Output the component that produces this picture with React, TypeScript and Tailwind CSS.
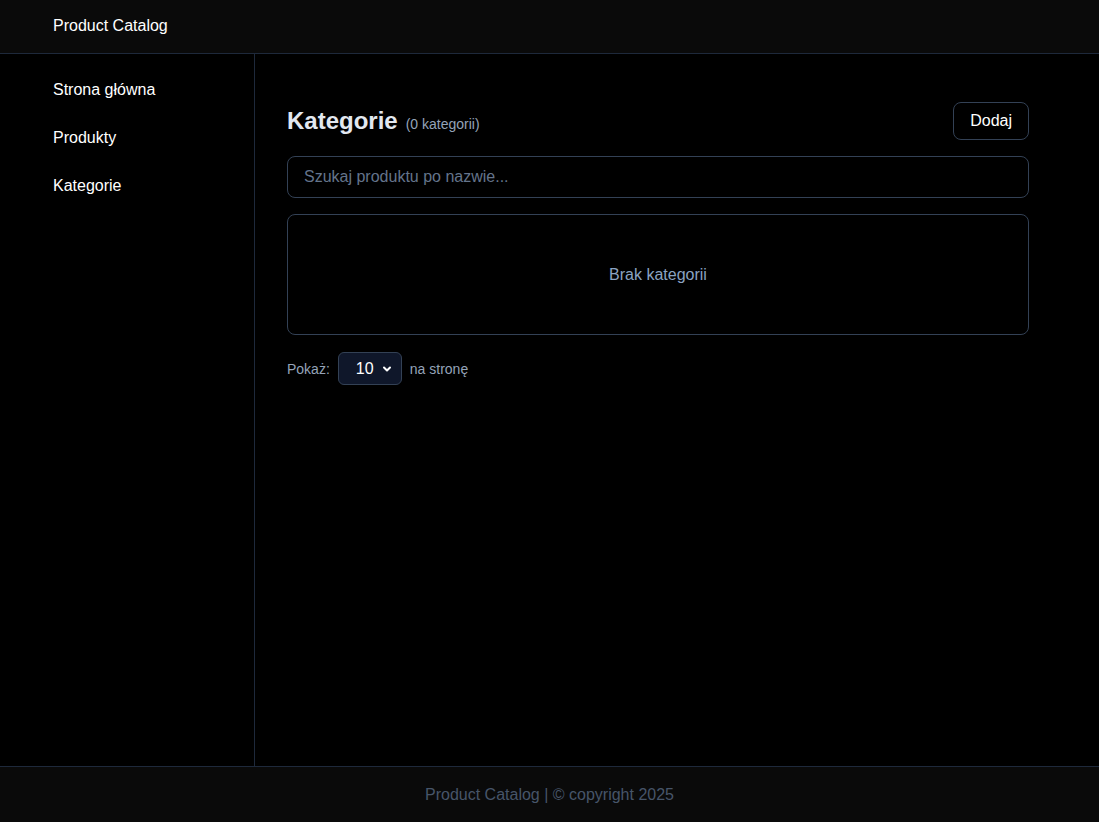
import { useState } from 'react';

const navItems = ['Strona główna', 'Produkty', 'Kategorie'];

export default function App() {
    const [perPage, setPerPage] = useState('10');

    return (
        <div className="flex h-[822px] flex-col bg-black text-white" style={{ fontFamily: '"Liberation Sans", Arial, sans-serif' }}>
            {/* Header */}
            <header className="flex h-[54px] shrink-0 items-center border-b border-[#1e293b] bg-[#0a0a0a] px-[53px] pb-[1px]">
                <span className="text-base text-white">Product Catalog</span>
            </header>

            <div className="flex min-h-0 flex-1">
                {/* Sidebar */}
                <aside className="w-[255px] shrink-0 border-r border-[#1e293b] pt-[12px]">
                    <nav className="flex flex-col">
                        {navItems.map((item) => (
                            <a key={item} href="#" className="flex h-12 items-center pl-[53px] text-base text-white">
                                {item}
                            </a>
                        ))}
                    </nav>
                </aside>

                {/* Main */}
                <main className="flex-1 pl-8 pr-[70px] pt-12">
                    <div className="flex items-center justify-between">
                        <div className="flex items-baseline gap-2">
                            <h1 className="text-2xl font-bold text-[#e2e8f0]">Kategorie</h1>
                            <span className="text-sm text-[#94a3b8]">(0 kategorii)</span>
                        </div>
                        <button className="h-[38px] rounded-lg border border-[#334155] px-4 text-base text-white">
                            Dodaj
                        </button>
                    </div>

                    <input
                        type="text"
                        placeholder="Szukaj produktu po nazwie..."
                        className="mt-4 block h-[42px] w-full rounded-lg border border-[#334155] bg-black px-4 text-base text-white outline-none placeholder:text-[#64748b]"
                    />

                    <div className="mt-4 flex h-[121px] items-center justify-center rounded-lg border border-[#334155]">
                        <span className="text-base text-[#8ba3c2]">Brak kategorii</span>
                    </div>

                    <div className="mt-[17px] flex items-center gap-2 text-sm text-[#94a3b8]">
                        <span>Pokaż:</span>
                        <div className="relative">
                            <select
                                value={perPage}
                                onChange={(e) => setPerPage(e.target.value)}
                                className="h-[33px] w-16 appearance-none rounded-md border border-[#334155] bg-[#0f172a] pl-[17px] text-base text-white outline-none"
                            >
                                <option value="10">10</option>
                                <option value="25">25</option>
                                <option value="50">50</option>
                            </select>
                            <svg
                                className="pointer-events-none absolute right-[9px] top-1/2 h-3 w-3 -translate-y-1/2 text-white"
                                viewBox="0 0 12 12"
                                fill="none"
                                stroke="currentColor"
                                strokeWidth="2"
                                strokeLinecap="round"
                                strokeLinejoin="round"
                            >
                                <path d="M3 4.5 6 7.5 9 4.5" />
                            </svg>
                        </div>
                        <span>na stronę</span>
                    </div>
                </main>
            </div>

            {/* Footer */}
            <footer className="flex h-[56px] shrink-0 items-center justify-center border-t border-[#1e293b] bg-[#0a0a0a]">
                <span className="text-base text-[#475569]">Product Catalog | © copyright 2025</span>
            </footer>
        </div>
    );
}
